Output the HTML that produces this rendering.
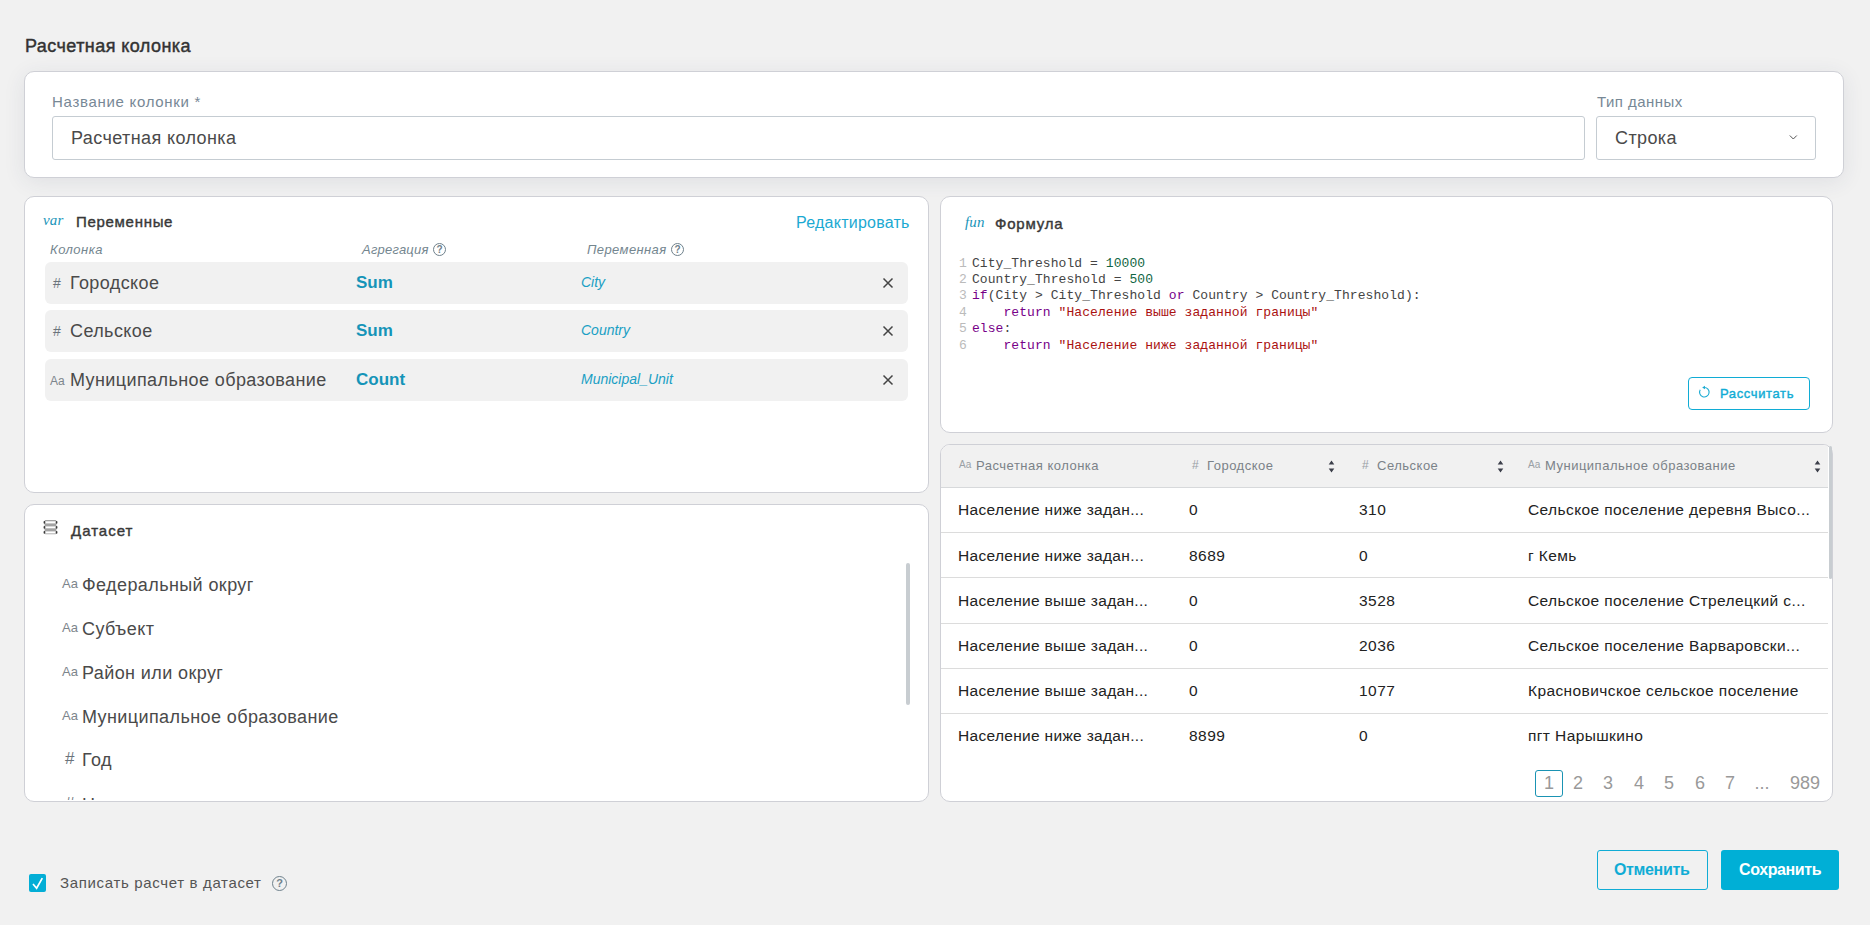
<!DOCTYPE html>
<html><head><meta charset="utf-8">
<style>
*{box-sizing:border-box;margin:0;padding:0}
html,body{width:1870px;height:925px;overflow:hidden;background:#f1f1f1;font-family:"Liberation Sans",sans-serif;color:#333}
.abs{position:absolute}
.card{position:absolute;background:#fff;border:1px solid #cfd0d6;border-radius:10px}
.t{position:absolute;white-space:nowrap;line-height:1}
.code .ln{display:inline-block;width:13px;letter-spacing:0;color:#bbb}
.code .nu{color:#164}
.code .kw{color:#708}
.code .st{color:#a11}
.q{position:absolute;width:13px;height:13px;border:1px solid #6f818c;border-radius:50%;font-size:10px;font-weight:bold;line-height:11px;text-align:center;color:#6f818c}
</style></head><body>

<div class="t" style="left:25px;top:37px;font-size:18px;color:#333;-webkit-text-stroke:0.45px #333;letter-spacing:0.43px">Расчетная колонка</div>

<!-- top card -->
<div class="card" style="left:24px;top:71px;width:1820px;height:107px;box-shadow:0 4px 22px rgba(40,50,90,0.09)"></div>
<div class="t" style="left:52px;top:94px;font-size:15px;color:#778896;letter-spacing:0.7px">Название колонки *</div>
<div class="abs" style="left:52px;top:116px;width:1533px;height:44px;border:1px solid #c5ccd2;border-radius:3px;background:#fff"></div>
<div class="t" style="left:71px;top:129px;font-size:18px;color:#4a4a4a;letter-spacing:0.4px">Расчетная колонка</div>
<div class="t" style="left:1597px;top:94px;font-size:15px;color:#778896;letter-spacing:0.46px">Тип данных</div>
<div class="abs" style="left:1596px;top:116px;width:220px;height:44px;border:1px solid #c5ccd2;border-radius:3px;background:#fff"></div>
<div class="t" style="left:1615px;top:129px;font-size:18px;color:#4a4a4a;letter-spacing:0.4px">Строка</div>
<svg class="abs" style="left:1788px;top:134px" width="10" height="7" viewBox="0 0 10 7"><path d="M1.8 1.5 L5.3 5 L8.8 1.5" fill="none" stroke="#555" stroke-width="1"/></svg>

<!-- variables card -->
<div class="card" style="left:24px;top:196px;width:905px;height:297px"></div>
<div class="t" style="left:43px;top:213px;font-family:'Liberation Serif',serif;font-size:15px;font-style:italic;color:#1994b9;letter-spacing:0.2px">var</div>
<div class="t" style="left:76px;top:214px;font-size:15px;color:#383838;-webkit-text-stroke:0.4px #383838;letter-spacing:0.7px">Переменные</div>
<div class="t" style="left:796px;top:215px;font-size:16px;color:#1ba9d2;letter-spacing:0.24px">Редактировать</div>
<div class="t" style="left:50px;top:243px;font-size:13px;font-style:italic;color:#74868f;letter-spacing:0.47px">Колонка</div>
<div class="t" style="left:362px;top:243px;font-size:13px;font-style:italic;color:#74868f;letter-spacing:0.22px">Агрегация</div>
<div class="t" style="left:587px;top:243px;font-size:13px;font-style:italic;color:#74868f;letter-spacing:0.4px">Переменная</div>

<div class="abs" style="left:45px;top:262px;width:863px;height:42px;background:#f1f1f1;border-radius:6px"></div>
<div class="t" style="left:53px;top:276px;font-size:14px;color:#6b747c">#</div>
<div class="t" style="left:70px;top:274px;font-size:18px;color:#4a4a4a;letter-spacing:0.4px">Городское</div>
<div class="t" style="left:356px;top:274px;font-size:17px;font-weight:bold;color:#1594b8">Sum</div>
<div class="t" style="left:581px;top:275px;font-size:14px;font-style:italic;color:#1a9fc4">City</div>
<svg class="abs" style="left:882px;top:277px" width="12" height="12" viewBox="0 0 12 12"><path d="M1.5 1.5L10.5 10.5M10.5 1.5L1.5 10.5" stroke="#444" stroke-width="1.5"/></svg>
<div class="abs" style="left:45px;top:310px;width:863px;height:42px;background:#f1f1f1;border-radius:6px"></div>
<div class="t" style="left:53px;top:324px;font-size:14px;color:#6b747c">#</div>
<div class="t" style="left:70px;top:322px;font-size:18px;color:#4a4a4a;letter-spacing:0.4px">Сельское</div>
<div class="t" style="left:356px;top:322px;font-size:17px;font-weight:bold;color:#1594b8">Sum</div>
<div class="t" style="left:581px;top:323px;font-size:14px;font-style:italic;color:#1a9fc4">Country</div>
<svg class="abs" style="left:882px;top:325px" width="12" height="12" viewBox="0 0 12 12"><path d="M1.5 1.5L10.5 10.5M10.5 1.5L1.5 10.5" stroke="#444" stroke-width="1.5"/></svg>
<div class="abs" style="left:45px;top:359px;width:863px;height:42px;background:#f1f1f1;border-radius:6px"></div>
<div class="t" style="left:50px;top:375px;font-size:12px;color:#7d858c">Aa</div>
<div class="t" style="left:70px;top:371px;font-size:18px;color:#4a4a4a;letter-spacing:0.4px">Муниципальное образование</div>
<div class="t" style="left:356px;top:371px;font-size:17px;font-weight:bold;color:#1594b8">Count</div>
<div class="t" style="left:581px;top:372px;font-size:14px;font-style:italic;color:#1a9fc4">Municipal_Unit</div>
<svg class="abs" style="left:882px;top:374px" width="12" height="12" viewBox="0 0 12 12"><path d="M1.5 1.5L10.5 10.5M10.5 1.5L1.5 10.5" stroke="#444" stroke-width="1.5"/></svg>


<div class="q" style="left:433px;top:243px">?</div>
<div class="q" style="left:671px;top:243px">?</div>
<div class="q" style="left:272px;top:876px;width:15px;height:15px;line-height:13px;font-size:11px">?</div>
<!-- dataset card -->
<div class="card" style="left:24px;top:504px;width:905px;height:298px"></div>
<div class="t" style="left:71px;top:523px;font-size:15px;color:#383838;-webkit-text-stroke:0.4px #383838;letter-spacing:1px">Датасет</div>
<svg class="abs" style="left:43px;top:520px" width="15" height="15" viewBox="0 0 15 15"><rect x="1.6" y="0" width="11.8" height="14.3" rx="1" fill="#a2a2a2"/><g fill="#fff"><rect x="1.6" y="1.3" width="11.8" height="2.1"/><rect x="1.6" y="6.4" width="11.8" height="1.9"/><rect x="1.6" y="11.4" width="11.8" height="2"/></g><g fill="#3a3a3a"><rect x="0.6" y="0.9" width="1.7" height="2.9" rx="0.8"/><rect x="12.7" y="0.9" width="1.7" height="2.9" rx="0.8"/><rect x="0.6" y="5.9" width="1.7" height="2.9" rx="0.8"/><rect x="12.7" y="5.9" width="1.7" height="2.9" rx="0.8"/><rect x="0.6" y="10.9" width="1.7" height="2.9" rx="0.8"/><rect x="12.7" y="10.9" width="1.7" height="2.9" rx="0.8"/></g></svg>
<div class="abs" style="left:25px;top:505px;width:903px;height:295px;overflow:hidden;border-radius:10px">
<div class="t" style="left:37px;top:72px;font-size:13px;color:#7d858c">Aa</div>
<div class="t" style="left:57px;top:71px;font-size:18px;color:#4a4a4a;letter-spacing:0.4px">Федеральный округ</div>
<div class="t" style="left:37px;top:116px;font-size:13px;color:#7d858c">Aa</div>
<div class="t" style="left:57px;top:115px;font-size:18px;color:#4a4a4a;letter-spacing:0.4px">Субъект</div>
<div class="t" style="left:37px;top:160px;font-size:13px;color:#7d858c">Aa</div>
<div class="t" style="left:57px;top:159px;font-size:18px;color:#4a4a4a;letter-spacing:0.4px">Район или округ</div>
<div class="t" style="left:37px;top:204px;font-size:13px;color:#7d858c">Aa</div>
<div class="t" style="left:57px;top:203px;font-size:18px;color:#4a4a4a;letter-spacing:0.4px">Муниципальное образование</div>
<div class="t" style="left:40px;top:245px;font-size:17px;color:#6b747c">#</div>
<div class="t" style="left:57px;top:246px;font-size:18px;color:#4a4a4a;letter-spacing:0.4px">Год</div>
<div class="t" style="left:40px;top:290px;font-size:17px;color:#6b747c">#</div>
<div class="t" style="left:57px;top:291px;font-size:18px;color:#4a4a4a;letter-spacing:0.4px">Население</div>
</div>
<div class="abs" style="left:906px;top:563px;width:4px;height:142px;background:#c8cdd1;border-radius:2px"></div>

<!-- formula card -->
<div class="card" style="left:940px;top:196px;width:893px;height:237px"></div>
<div class="t" style="left:965px;top:215px;font-family:'Liberation Serif',serif;font-size:15px;font-style:italic;color:#1994b9;letter-spacing:0.2px">fun</div>
<div class="t" style="left:995px;top:216px;font-size:15px;color:#383838;-webkit-text-stroke:0.4px #383838;letter-spacing:0.78px">Формула</div>
<div class="abs code" style="left:959px;top:255.5px;font-family:'Liberation Mono',monospace;font-size:13px;line-height:16.45px;letter-spacing:0.07px;white-space:pre;color:#444"><span class="ln">1</span>City_Threshold = <span class="nu">10000</span>
<span class="ln">2</span>Country_Threshold = <span class="nu">500</span>
<span class="ln">3</span><span class="kw">if</span>(City &gt; City_Threshold <span class="kw">or</span> Country &gt; Country_Threshold):
<span class="ln">4</span>    <span class="kw">return</span> <span class="st">"Население выше заданной границы"</span>
<span class="ln">5</span><span class="kw">else</span>:
<span class="ln">6</span>    <span class="kw">return</span> <span class="st">"Население ниже заданной границы"</span></div>
<div class="abs" style="left:1688px;top:377px;width:122px;height:33px;border:1.3px solid #10acd5;border-radius:4px"></div>
<svg class="abs" style="left:1696px;top:383px" width="16" height="16" viewBox="0 0 16 16"><path d="M8.3 4.45 A4.75 4.75 0 1 1 4.2 6.85" fill="none" stroke="#1aabd3" stroke-width="1.1"/><path d="M9 2.8 L9 6.3 L6.2 4.6Z" fill="#1aabd3"/></svg>
<div class="t" style="left:1720px;top:387px;font-size:13px;color:#10acd5;-webkit-text-stroke:0.4px #10acd5;letter-spacing:0.62px">Рассчитать</div>

<!-- table card -->
<div class="card" style="left:940px;top:444px;width:893px;height:358px;overflow:hidden"></div>
<div class="abs" style="left:941px;top:445px;width:891px;height:356px;overflow:hidden;border-radius:9px">
<div class="abs" style="left:0;top:0;width:887px;height:43px;background:#f1f1f1;border-bottom:1px solid #d7d9db"></div>
<div class="t" style="left:18px;top:15px;font-size:10px;color:#9aa0a5">Aa</div>
<div class="t" style="left:35px;top:14px;font-size:13px;color:#7b8288;letter-spacing:0.5px">Расчетная колонка</div>
<div class="t" style="left:251px;top:14px;font-size:12px;color:#9aa0a5">#</div>
<div class="t" style="left:266px;top:14px;font-size:13px;color:#7b8288;letter-spacing:0.5px">Городское</div>
<svg class="abs" style="left:387px;top:14px" width="7" height="14" viewBox="0 0 7 14"><path d="M3.5 1.6 L6.3 5.6 L0.7 5.6Z M3.5 13.4 L6.3 9.4 L0.7 9.4Z" fill="#3c3f4a"/></svg>
<div class="t" style="left:421px;top:14px;font-size:12px;color:#9aa0a5">#</div>
<div class="t" style="left:436px;top:14px;font-size:13px;color:#7b8288;letter-spacing:0.5px">Сельское</div>
<svg class="abs" style="left:556px;top:14px" width="7" height="14" viewBox="0 0 7 14"><path d="M3.5 1.6 L6.3 5.6 L0.7 5.6Z M3.5 13.4 L6.3 9.4 L0.7 9.4Z" fill="#3c3f4a"/></svg>
<div class="t" style="left:587px;top:15px;font-size:10px;color:#9aa0a5">Aa</div>
<div class="t" style="left:604px;top:14px;font-size:13px;color:#7b8288;letter-spacing:0.5px">Муниципальное образование</div>
<svg class="abs" style="left:873px;top:14px" width="7" height="14" viewBox="0 0 7 14"><path d="M3.5 1.6 L6.3 5.6 L0.7 5.6Z M3.5 13.4 L6.3 9.4 L0.7 9.4Z" fill="#3c3f4a"/></svg>
<div class="abs" style="left:0;top:87.2px;width:887px;height:1px;background:#dcdcdc"></div>
<div class="t" style="left:17px;top:57.48px;font-size:15.5px;color:#222;letter-spacing:0.31px">Население ниже задан...</div>
<div class="t" style="left:248px;top:57.48px;font-size:15.5px;color:#222;letter-spacing:0.47px">0</div>
<div class="t" style="left:418px;top:57.48px;font-size:15.5px;color:#222;letter-spacing:0.47px">310</div>
<div class="t" style="left:587px;top:57.48px;font-size:15.5px;color:#222;letter-spacing:0.4px">Сельское поселение деревня Высо...</div>
<div class="abs" style="left:0;top:132.4px;width:887px;height:1px;background:#dcdcdc"></div>
<div class="t" style="left:17px;top:102.68px;font-size:15.5px;color:#222;letter-spacing:0.31px">Население ниже задан...</div>
<div class="t" style="left:248px;top:102.68px;font-size:15.5px;color:#222;letter-spacing:0.47px">8689</div>
<div class="t" style="left:418px;top:102.68px;font-size:15.5px;color:#222;letter-spacing:0.47px">0</div>
<div class="t" style="left:587px;top:102.68px;font-size:15.5px;color:#222;letter-spacing:0.4px">г Кемь</div>
<div class="abs" style="left:0;top:177.6px;width:887px;height:1px;background:#dcdcdc"></div>
<div class="t" style="left:17px;top:147.88px;font-size:15.5px;color:#222;letter-spacing:0.31px">Население выше задан...</div>
<div class="t" style="left:248px;top:147.88px;font-size:15.5px;color:#222;letter-spacing:0.47px">0</div>
<div class="t" style="left:418px;top:147.88px;font-size:15.5px;color:#222;letter-spacing:0.47px">3528</div>
<div class="t" style="left:587px;top:147.88px;font-size:15.5px;color:#222;letter-spacing:0.4px">Сельское поселение Стрелецкий с...</div>
<div class="abs" style="left:0;top:222.8px;width:887px;height:1px;background:#dcdcdc"></div>
<div class="t" style="left:17px;top:193.08px;font-size:15.5px;color:#222;letter-spacing:0.31px">Население выше задан...</div>
<div class="t" style="left:248px;top:193.08px;font-size:15.5px;color:#222;letter-spacing:0.47px">0</div>
<div class="t" style="left:418px;top:193.08px;font-size:15.5px;color:#222;letter-spacing:0.47px">2036</div>
<div class="t" style="left:587px;top:193.08px;font-size:15.5px;color:#222;letter-spacing:0.4px">Сельское поселение Варваровски...</div>
<div class="abs" style="left:0;top:268.0px;width:887px;height:1px;background:#dcdcdc"></div>
<div class="t" style="left:17px;top:238.28px;font-size:15.5px;color:#222;letter-spacing:0.31px">Население выше задан...</div>
<div class="t" style="left:248px;top:238.28px;font-size:15.5px;color:#222;letter-spacing:0.47px">0</div>
<div class="t" style="left:418px;top:238.28px;font-size:15.5px;color:#222;letter-spacing:0.47px">1077</div>
<div class="t" style="left:587px;top:238.28px;font-size:15.5px;color:#222;letter-spacing:0.4px">Красновичское сельское поселение</div>
<div class="t" style="left:17px;top:283.48px;font-size:15.5px;color:#222;letter-spacing:0.31px">Население ниже задан...</div>
<div class="t" style="left:248px;top:283.48px;font-size:15.5px;color:#222;letter-spacing:0.47px">8899</div>
<div class="t" style="left:418px;top:283.48px;font-size:15.5px;color:#222;letter-spacing:0.47px">0</div>
<div class="t" style="left:587px;top:283.48px;font-size:15.5px;color:#222;letter-spacing:0.4px">пгт Нарышкино</div>
<div class="abs" style="left:594px;top:325px;width:28px;height:27px;border:1px solid #1a93b3;border-radius:3px"></div>
<div class="t" style="left:608px;top:329px;font-size:18px;color:#999;transform:translateX(-50%)">1</div>
<div class="t" style="left:637px;top:329px;font-size:18px;color:#999;transform:translateX(-50%)">2</div>
<div class="t" style="left:667px;top:329px;font-size:18px;color:#999;transform:translateX(-50%)">3</div>
<div class="t" style="left:698px;top:329px;font-size:18px;color:#999;transform:translateX(-50%)">4</div>
<div class="t" style="left:728px;top:329px;font-size:18px;color:#999;transform:translateX(-50%)">5</div>
<div class="t" style="left:759px;top:329px;font-size:18px;color:#999;transform:translateX(-50%)">6</div>
<div class="t" style="left:789px;top:329px;font-size:18px;color:#999;transform:translateX(-50%)">7</div>
<div class="t" style="left:821px;top:329px;font-size:18px;color:#999;transform:translateX(-50%)">...</div>
<div class="t" style="left:864px;top:329px;font-size:18px;color:#999;transform:translateX(-50%)">989</div>
</div>


<div class="abs" style="left:1828.5px;top:445.5px;width:3.8px;height:133px;background:#c8cdd1;border-radius:2px"></div>
<!-- footer -->
<div class="abs" style="left:29px;top:874px;width:17px;height:18px;background:#03aed6;border-radius:2px"></div>
<svg class="abs" style="left:29px;top:874px" width="17" height="18" viewBox="0 0 17 18"><path d="M4 10 L7.6 14.2 L13.3 4.2" fill="none" stroke="#fff" stroke-width="1.7"/></svg>
<div class="t" style="left:60px;top:875px;font-size:15px;color:#555;letter-spacing:0.66px">Записать расчет в датасет</div>
<div class="abs" style="left:1597px;top:850px;width:111px;height:40px;border:1.5px solid #10acd5;border-radius:3px"></div>
<div class="t" style="left:1614px;top:862px;font-size:16px;font-weight:bold;color:#10acd5;letter-spacing:-0.35px">Отменить</div>
<div class="abs" style="left:1721px;top:850px;width:118px;height:40px;background:#00afd6;border-radius:3px"></div>
<div class="t" style="left:1739px;top:862px;font-size:16px;font-weight:bold;color:#fff;letter-spacing:-0.4px">Сохранить</div>

</body></html>
